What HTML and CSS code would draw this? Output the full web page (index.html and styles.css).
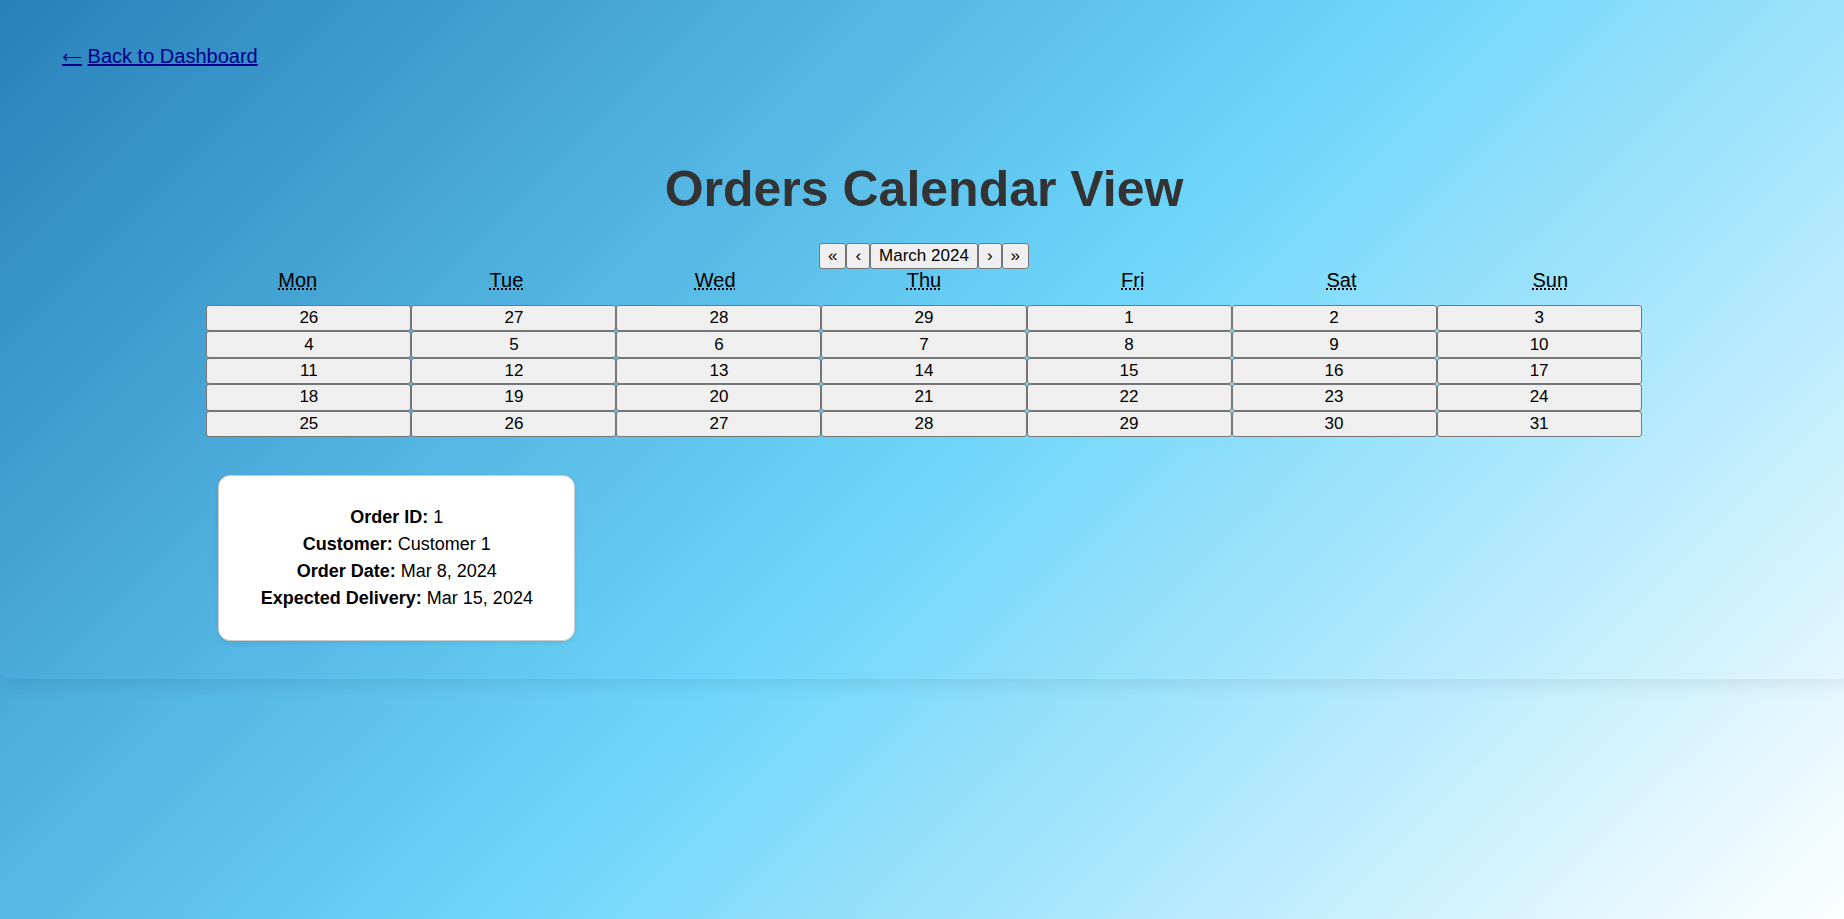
FILE: index.html
```html
<!DOCTYPE html>
<html lang="en">
<head>
<meta charset="utf-8">
<title>Orders Calendar View</title>
<link rel="stylesheet" href="styles.css">
</head>
<body>
<main class="page">
  <nav class="back"><a href="#dashboard" aria-label="Back"><svg class="arrow" viewBox="0 0 20 8" aria-hidden="true"><path d="M1.5 4.5H19"/><path class="head" d="M4.8 1 1.8 4.5l3 3"/></svg></a> <a href="#dashboard">Back to Dashboard</a></nav>
  <h1 class="title">Orders Calendar View</h1>
  <section class="calendar">
    <div class="navigation">
      <button>«</button><button>‹</button><button>March 2024</button><button>›</button><button>»</button>
    </div>
    <div class="weekdays">
      <div><abbr title="Monday">Mon</abbr></div><div><abbr title="Tuesday">Tue</abbr></div><div><abbr title="Wednesday">Wed</abbr></div><div><abbr title="Thursday">Thu</abbr></div><div><abbr title="Friday">Fri</abbr></div><div><abbr title="Saturday">Sat</abbr></div><div><abbr title="Sunday">Sun</abbr></div>
    </div>
    <div class="days">
      <button>26</button><button>27</button><button>28</button><button>29</button><button>1</button><button>2</button><button>3</button>
      <button>4</button><button>5</button><button>6</button><button>7</button><button>8</button><button>9</button><button>10</button>
      <button>11</button><button>12</button><button>13</button><button>14</button><button>15</button><button>16</button><button>17</button>
      <button>18</button><button>19</button><button>20</button><button>21</button><button>22</button><button>23</button><button>24</button>
      <button>25</button><button>26</button><button>27</button><button>28</button><button>29</button><button>30</button><button>31</button>
    </div>
  </section>
  <section class="orders">
    <article class="card">
      <p><strong>Order ID:</strong> 1</p>
      <p><strong>Customer:</strong> Customer 1</p>
      <p><strong>Order Date:</strong> Mar 8, 2024</p>
      <p><strong>Expected Delivery:</strong> Mar 15, 2024</p>
    </article>
  </section>
</main>
</body>
</html>
```
FILE: styles.css
```css
* { box-sizing: border-box; }
html { min-height: 100%; background: linear-gradient(135deg, #2980b9, #6dd5fa, #ffffff) no-repeat; background-size: calc(100% + 10px) calc(100% + 10px); }
body { min-height: 100vh; margin: 0; overflow-x: hidden; font: 20px/23px "Liberation Sans", Arial, sans-serif; color: #000; }
.page { margin: 0 -6px 0 -2px; padding: 45px 0 26px; border-radius: 0 0 12px 12px; box-shadow: 0 5px 18px rgba(0, 0, 0, 0.08); text-align: center; }
.back { padding: 0 64px; text-align: left; }
.back a { color: #00008b; text-decoration-thickness: 2px; }
.arrow { box-sizing: content-box; width: 20px; height: 8px; padding-bottom: 3px; border-bottom: 2px solid currentColor; vertical-align: -3px; fill: none; stroke: currentColor; stroke-width: 1; }
.arrow .head { stroke-width: 1.4; }
.title { margin: 92px 0 25px; font-size: 50px; line-height: 58px; color: #333; }
.calendar, .orders { width: 77.5%; margin: 0 auto; }
.navigation { display: flex; justify-content: center; }
button { font: 17px/20px "Liberation Sans", Arial, sans-serif; padding: 2px 8px; border: 1px solid #767676; border-radius: 3px; background: #efefef; color: #000; }
.weekdays { display: grid; grid-template-columns: repeat(7, 1fr); margin: 0 -13px; padding-bottom: 13px; }
.days { display: grid; grid-template-columns: repeat(7, 1fr); grid-auto-rows: 1fr; min-height: 132px; }
.orders { display: flex; padding: 38px 12px 12px; }
.card { width: 357px; padding: 28px 20px; border: 1px solid #ccc; border-radius: 12px; background: #fff; box-shadow: 0 2px 5px rgba(0, 0, 0, 0.08); }
.card p { margin: 0; font-size: 18px; line-height: 27px; }
```
